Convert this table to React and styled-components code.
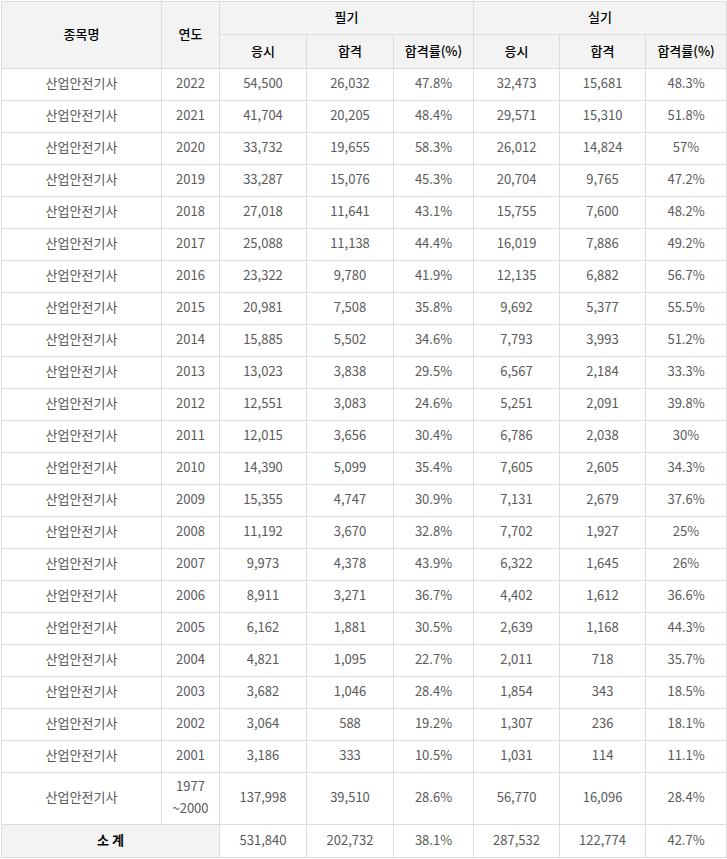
import React from 'react';
import styled, {createGlobalStyle} from 'styled-components';

const GlobalStyle = createGlobalStyle`
  html, body {
    margin: 0;
    padding: 0;
    background: #fff;
  }
  body {
    font-family: 'Noto Sans CJK KR', 'Noto Sans', sans-serif;
  }
`

const rows = [
    ['2022', '54,500', '26,032', '47.8%', '32,473', '15,681', '48.3%'],
    ['2021', '41,704', '20,205', '48.4%', '29,571', '15,310', '51.8%'],
    ['2020', '33,732', '19,655', '58.3%', '26,012', '14,824', '57%'],
    ['2019', '33,287', '15,076', '45.3%', '20,704', '9,765', '47.2%'],
    ['2018', '27,018', '11,641', '43.1%', '15,755', '7,600', '48.2%'],
    ['2017', '25,088', '11,138', '44.4%', '16,019', '7,886', '49.2%'],
    ['2016', '23,322', '9,780', '41.9%', '12,135', '6,882', '56.7%'],
    ['2015', '20,981', '7,508', '35.8%', '9,692', '5,377', '55.5%'],
    ['2014', '15,885', '5,502', '34.6%', '7,793', '3,993', '51.2%'],
    ['2013', '13,023', '3,838', '29.5%', '6,567', '2,184', '33.3%'],
    ['2012', '12,551', '3,083', '24.6%', '5,251', '2,091', '39.8%'],
    ['2011', '12,015', '3,656', '30.4%', '6,786', '2,038', '30%'],
    ['2010', '14,390', '5,099', '35.4%', '7,605', '2,605', '34.3%'],
    ['2009', '15,355', '4,747', '30.9%', '7,131', '2,679', '37.6%'],
    ['2008', '11,192', '3,670', '32.8%', '7,702', '1,927', '25%'],
    ['2007', '9,973', '4,378', '43.9%', '6,322', '1,645', '26%'],
    ['2006', '8,911', '3,271', '36.7%', '4,402', '1,612', '36.6%'],
    ['2005', '6,162', '1,881', '30.5%', '2,639', '1,168', '44.3%'],
    ['2004', '4,821', '1,095', '22.7%', '2,011', '718', '35.7%'],
    ['2003', '3,682', '1,046', '28.4%', '1,854', '343', '18.5%'],
    ['2002', '3,064', '588', '19.2%', '1,307', '236', '18.1%'],
    ['2001', '3,186', '333', '10.5%', '1,031', '114', '11.1%'],
];

const colWidths = [160, 58, 87, 87, 80, 86, 86, 81];

function App(){
    return(
        <Wrap>
            <GlobalStyle/>
            <Table>
                <colgroup>
                    {colWidths.map((w, i) => <col key={i} style={{width: w}}/>)}
                </colgroup>
                <thead>
                    <tr>
                        <Th rowSpan={2}>종목명</Th>
                        <Th rowSpan={2}>연도</Th>
                        <Th colSpan={3} $h={33}>필기</Th>
                        <Th colSpan={3} $h={33}>실기</Th>
                    </tr>
                    <tr>
                        <Th $h={34}>응시</Th>
                        <Th $h={34}>합격</Th>
                        <Th $h={34}>합격률(%)</Th>
                        <Th $h={34}>응시</Th>
                        <Th $h={34}>합격</Th>
                        <Th $h={34}>합격률(%)</Th>
                    </tr>
                </thead>
                <tbody>
                    {rows.map(r => (
                        <tr key={r[0]}>
                            <Td>산업안전기사</Td>
                            {r.map((v, i) => <Td key={i}>{v}</Td>)}
                        </tr>
                    ))}
                    <tr>
                        <Td $h={52}>산업안전기사</Td>
                        <Td $h={52}>1977<br/>~2000</Td>
                        <Td $h={52}>137,998</Td>
                        <Td $h={52}>39,510</Td>
                        <Td $h={52}>28.6%</Td>
                        <Td $h={52}>56,770</Td>
                        <Td $h={52}>16,096</Td>
                        <Td $h={52}>28.4%</Td>
                    </tr>
                    <tr>
                        <TotalLabel colSpan={2}>소 계</TotalLabel>
                        <Td $h={33}>531,840</Td>
                        <Td $h={33}>202,732</Td>
                        <Td $h={33}>38.1%</Td>
                        <Td $h={33}>287,532</Td>
                        <Td $h={33}>122,774</Td>
                        <Td $h={33}>42.7%</Td>
                    </tr>
                </tbody>
            </Table>
        </Wrap>
    )
}

const Wrap = styled.div`
padding: 1px 0 0 1px;
`
const Table = styled.table`
width: 725px;
table-layout: fixed;
border-collapse: collapse;
border: 1px solid #dcdcdc;
font-size: 13px;
`
const Th = styled.th`
height: ${p => (p.$h || 67) - 4}px;
padding: 0 0 3px;
background: #f3f3f3;
border: 1px solid #dcdcdc;
color: #000;
font-weight: 500;
font-size: 13px;
text-align: center;
vertical-align: middle;
`
const Td = styled.td`
height: ${p => (p.$h || 32) - 4}px;
padding: 0 0 3px;
border: 1px solid #dcdcdc;
color: #5a5a5a;
text-align: center;
vertical-align: middle;
line-height: 22px;
`
const TotalLabel = styled.td`
height: 29px;
padding: 0 0 3px;
border: 1px solid #dcdcdc;
background: #f3f3f3;
color: #000;
font-weight: bold;
text-align: center;
vertical-align: middle;
`
export default App;
